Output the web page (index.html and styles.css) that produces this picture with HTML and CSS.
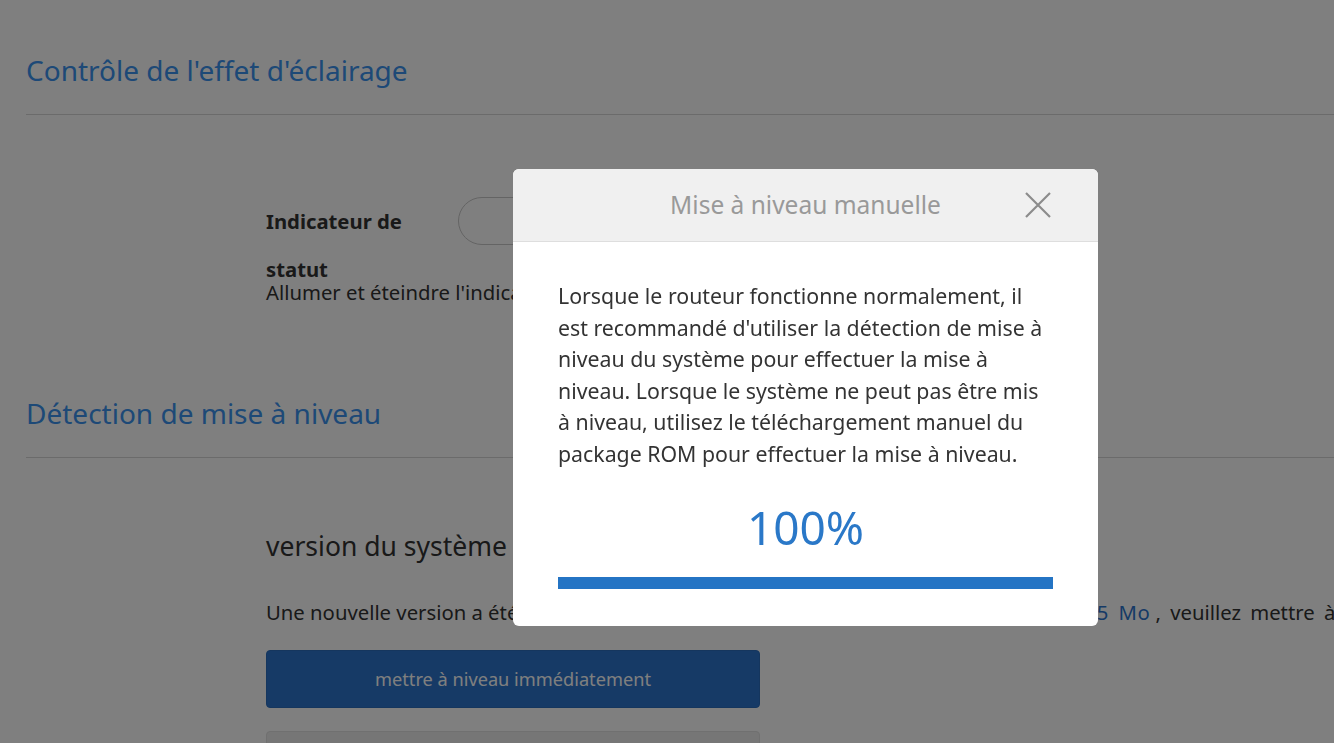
FILE: index.html
```html
<!DOCTYPE html>
<html lang="fr">
<head>
<meta charset="utf-8">
<title>Mise à niveau manuelle</title>
<link rel="stylesheet" href="styles.css">
</head>
<body>
<div class="page">
  <section class="block">
    <h2 class="block-title">Contrôle de l'effet d'éclairage</h2>
    <div class="block-body">
      <div class="setting">
        <div class="setting-row">
          <div class="setting-label">Indicateur de statut</div>
          <div class="toggle"><span class="knob"></span></div>
        </div>
        <div class="setting-desc">Allumer et éteindre l'indicateur d'état du routeur</div>
      </div>
    </div>
  </section>
  <section class="block">
    <h2 class="block-title">Détection de mise à niveau</h2>
    <div class="block-body">
      <div class="sys-title">version du système actuelle : 1.0.2.156</div>
      <p class="sys-line">Une nouvelle version a été détectée, numéro de version : 1.0.5.160, taille du fichier : <span class="link">125 Mo</span> <span class="tail">, veuillez mettre à niveau</span></p>
      <button class="btn btn-primary">mettre à niveau immédiatement</button>
      <button class="btn btn-secondary">mise à niveau manuelle</button>
    </div>
  </section>
</div>

<div class="overlay">
  <div class="modal">
    <div class="modal-head">
      <span class="modal-title">Mise à niveau manuelle</span>
      <span class="modal-close">
        <svg width="26" height="26" viewBox="0 0 26 26"><path d="M1 1 L25 25 M25 1 L1 25" stroke="#8c8c8c" stroke-width="2.2" fill="none"/></svg>
      </span>
    </div>
    <div class="modal-body">
      <p class="modal-text">Lorsque le routeur fonctionne normalement, il est recommandé d'utiliser la détection de mise à niveau du système pour effectuer la mise à niveau. Lorsque le système ne peut pas être mis à niveau, utilisez le téléchargement manuel du package ROM pour effectuer la mise à niveau.</p>
      <div class="percent">100%</div>
      <div class="bar"><div class="bar-fill" style="width:100%"></div></div>
    </div>
  </div>
</div>
</body>
</html>
```
FILE: styles.css
```css
* { box-sizing: border-box; }
html, body { margin: 0; padding: 0; }
body {
  width: 1334px;
  height: 743px;
  overflow: hidden;
  background: #fff;
  font-family: "Noto Sans", "Open Sans", sans-serif;
  color: #333;
}
.page { padding: 0 0 0 26px; }
.block-title {
  margin: 0;
  padding-top: 50px;
  height: 115px;
  border-bottom: 1px solid #d6d6d6;
  font-size: 28px;
  font-weight: 400;
  line-height: 40px;
  color: #3b92ee;
  white-space: nowrap;
}
.block-body { padding-left: 240px; }
.setting { padding-top: 82px; height: 228px; }
.setting-row { display: flex; align-items: flex-start; }
.setting-label {
  width: 192px;
  padding-right: 20px;
  font-size: 20.3px;
  font-weight: 700;
  line-height: 48px;
  color: #333;
}
.toggle {
  width: 96px;
  height: 48px;
  border: 1px solid #c8c8c8;
  border-radius: 24px;
  background: #fff;
}
.setting-desc { font-size: 20.3px; line-height: 24px; color: #333; margin-top: -13px; white-space: nowrap; }
.sys-title { padding-top: 70px; font-size: 26.5px; line-height: 36px; color: #333; white-space: nowrap; }
.sys-line { margin: 35px 0 0 0; font-size: 20.3px; line-height: 26px; white-space: nowrap; color: #333; }
.link { color: #2c74cc; margin-left: 6px; word-spacing: 4px; letter-spacing: 0.5px; }
.tail { word-spacing: 4px; }
.btn {
  display: block;
  width: 494px;
  height: 58px;
  border-radius: 4px;
  font-family: inherit;
  font-size: 18.2px;
  border: 0;
}
.btn-primary { margin-top: 25px; background: #2c74cc; color: #fff; border: 1px solid #2a6cbd; }
.btn-secondary { margin-top: 23px; background: #ececec; color: #666; border: 1px solid #e0e0e0; }

.overlay {
  position: fixed;
  inset: 0;
  background: rgba(0, 0, 0, 0.5);
}
.modal {
  position: absolute;
  left: 513px;
  top: 169px;
  width: 585px;
  height: 457px;
  background: #fff;
  border-radius: 6px;
  overflow: hidden;
}
.modal-head {
  position: relative;
  height: 73px;
  background: #f0f0f0;
  border-bottom: 1px solid #dedede;
  display: flex;
  align-items: center;
  justify-content: center;
}
.modal-title { font-size: 24.5px; color: #999; margin-top: -1px; }
.modal-close {
  position: absolute;
  right: 47px;
  top: 23px;
  width: 26px;
  height: 26px;
  display: block;
}
.modal-close svg { display: block; }
.modal-body { padding: 38px 45px 0 45px; }
.modal-text {
  margin: 0;
  font-size: 21.3px;
  line-height: 31.5px;
  color: #333;
}
.percent {
  margin-top: 32px;
  text-align: center;
  font-size: 46px;
  line-height: 52px;
  color: #2a78c8;
}
.bar { margin-top: 24px; height: 12px; background: #e6e6e6; }
.bar-fill { height: 100%; background: #2474c4; }
```
